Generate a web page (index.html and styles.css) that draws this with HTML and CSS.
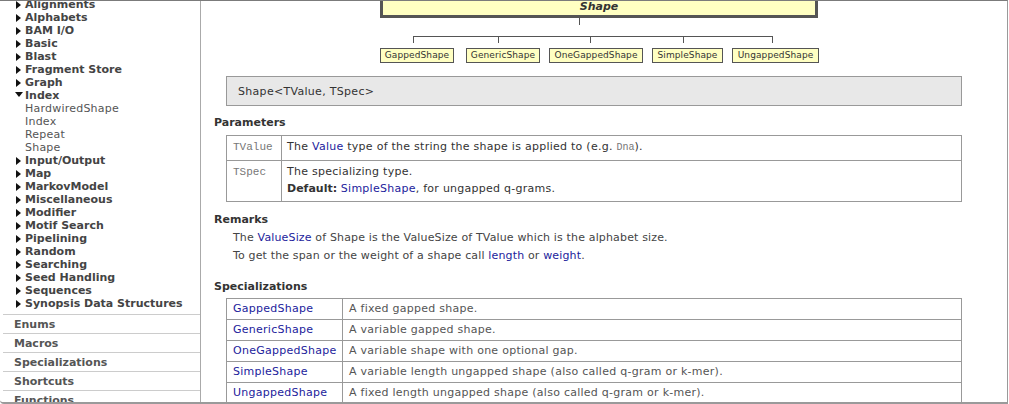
FILE: index.html
```html
<!DOCTYPE html>
<html>
<head>
<meta charset="utf-8">
<link rel="stylesheet" href="styles.css">
</head>
<body>
<div class="window">
  <aside class="sidebar">
    <ul class="tree">
      <li class="closed">Alignments</li>
      <li class="closed">Alphabets</li>
      <li class="closed">BAM I/O</li>
      <li class="closed">Basic</li>
      <li class="closed">Blast</li>
      <li class="closed">Fragment Store</li>
      <li class="closed">Graph</li>
      <li class="open">Index
        <ul class="sub">
          <li>HardwiredShape</li>
          <li>Index</li>
          <li>Repeat</li>
          <li>Shape</li>
        </ul>
      </li>
      <li class="closed">Input/Output</li>
      <li class="closed">Map</li>
      <li class="closed">MarkovModel</li>
      <li class="closed">Miscellaneous</li>
      <li class="closed">Modifier</li>
      <li class="closed">Motif Search</li>
      <li class="closed">Pipelining</li>
      <li class="closed">Random</li>
      <li class="closed">Searching</li>
      <li class="closed">Seed Handling</li>
      <li class="closed">Sequences</li>
      <li class="closed">Synopsis Data Structures</li>
    </ul>
    <div class="tab">Enums</div>
    <div class="tab">Macros</div>
    <div class="tab">Specializations</div>
    <div class="tab">Shortcuts</div>
    <div class="tab">Functions</div>
  </aside>

  <main class="content">
    <div class="diagram">
      <svg class="wires" width="438" height="62" viewBox="0 0 438 62">
        <g stroke="#555" stroke-width="1" fill="none">
          <line x1="199.5" y1="17" x2="199.5" y2="24"/>
          <line x1="33" y1="35.5" x2="393" y2="35.5"/>
          <line x1="33.5" y1="35" x2="33.5" y2="42"/>
          <line x1="118.5" y1="35" x2="118.5" y2="42"/>
          <line x1="210.5" y1="35" x2="210.5" y2="42"/>
          <line x1="303.5" y1="35" x2="303.5" y2="42"/>
          <line x1="392.5" y1="35" x2="392.5" y2="42"/>
        </g>
      </svg>
      <div class="node root">Shape</div>
      <div class="node leaf leaf-gapped">GappedShape</div>
      <div class="node leaf leaf-generic">GenericShape</div>
      <div class="node leaf leaf-onegapped">OneGappedShape</div>
      <div class="node leaf leaf-simple">SimpleShape</div>
      <div class="node leaf leaf-ungapped">UngappedShape</div>
    </div>

    <div class="signature">Shape&lt;TValue, TSpec&gt;</div>

    <h2 class="heading heading-params">Parameters</h2>
    <table class="grid params">
      <tr>
        <td class="name"><span class="code">TValue</span></td>
        <td class="desc">The <a class="link">Value</a> type of the string the shape is applied to (e.g. <span class="code small">Dna</span>).</td>
      </tr>
      <tr>
        <td class="name"><span class="code">TSpec</span></td>
        <td class="desc">
          <div>The specializing type.</div>
          <div><b class="strong">Default:</b> <a class="link">SimpleShape</a>, for ungapped q-grams.</div>
        </td>
      </tr>
    </table>

    <h2 class="heading heading-remarks">Remarks</h2>
    <div class="remarks">
      <p>The <a class="link">ValueSize</a> of Shape is the ValueSize of TValue which is the alphabet size.</p>
      <p>To get the span or the weight of a shape call <a class="link">length</a> or <a class="link">weight</a>.</p>
    </div>

    <h2 class="heading heading-specs">Specializations</h2>
    <table class="grid specs">
      <tr><td class="spec-name"><a class="link">GappedShape</a></td><td class="spec-desc">A fixed gapped shape.</td></tr>
      <tr><td class="spec-name"><a class="link">GenericShape</a></td><td class="spec-desc">A variable gapped shape.</td></tr>
      <tr><td class="spec-name"><a class="link">OneGappedShape</a></td><td class="spec-desc">A variable shape with one optional gap.</td></tr>
      <tr><td class="spec-name"><a class="link">SimpleShape</a></td><td class="spec-desc">A variable length ungapped shape (also called q-gram or k-mer).</td></tr>
      <tr><td class="spec-name"><a class="link">UngappedShape</a></td><td class="spec-desc">A fixed length ungapped shape (also called q-gram or k-mer).</td></tr>
    </table>
  </main>
</div>
</body>
</html>
```

FILE: styles.css
```css
* { box-sizing: border-box; }

body {
  margin: 0;
  background: #fff;
  font-family: "DejaVu Sans", Verdana, sans-serif;
  font-size: 11px;
  color: #444;
}

.window {
  width: 1008px;
  height: 404px;
  display: flex;
  overflow: hidden;
  border-top: 1px solid #7b7b7b;
  border-right: 1px solid #9a9a9a;
  border-bottom: 2px solid #9a9a9a;
  border-bottom-left-radius: 4px;
}

/* ---------- sidebar ---------- */
.sidebar {
  width: 201px;
  flex: none;
  border-right: 1px solid #aaa;
  overflow: hidden;
}

.tree, .sub {
  list-style: none;
  margin: 0;
  padding: 0;
}

.tree {
  margin-top: -3px;
  margin-bottom: 4px;
}

.tree li {
  line-height: 13px;
  font-weight: bold;
  color: #444;
  white-space: nowrap;
}

.tree li.closed { padding-left: 16px; }
.tree li.open { padding-left: 15px; }

.tree li.closed::before {
  content: "";
  display: inline-block;
  width: 0;
  height: 0;
  border-left: 5px solid #111;
  border-top: 4px solid transparent;
  border-bottom: 4px solid transparent;
  margin-right: 4px;
  vertical-align: -1px;
}

.tree li.open::before {
  content: "";
  display: inline-block;
  width: 0;
  height: 0;
  border-top: 5px solid #111;
  border-left: 4px solid transparent;
  border-right: 4px solid transparent;
  margin-right: 2px;
  vertical-align: 2px;
}

.sub { padding-left: 10px; }

.sub li {
  font-weight: normal;
  color: #555;
  letter-spacing: 0.22px;
}

.tab {
  margin-left: 3px;
  height: 19px;
  padding: 2px 0 0 11px;
  line-height: 16px;
  border-top: 1px solid #ccc;
  font-weight: bold;
  color: #555;
}

/* ---------- content ---------- */
.content {
  flex: 1;
  padding-left: 13px;
  overflow: hidden;
  letter-spacing: 0.26px;
}

.diagram {
  position: relative;
  width: 438px;
  height: 62px;
  margin-left: 166px;
  letter-spacing: 0;
}

.wires {
  position: absolute;
  left: 0;
  top: 0;
  overflow: visible;
}

.node {
  position: absolute;
  background: #ffffc2;
  color: #333;
  text-align: center;
  white-space: nowrap;
}

.root {
  left: 0;
  top: -6px;
  width: 438px;
  height: 23px;
  border: 3px solid #555;
  line-height: 18px;
  font-weight: bold;
  font-style: italic;
}

.leaf {
  top: 47px;
  height: 15px;
  border: 1px solid #555;
  font-size: 9px;
  line-height: 13px;
  letter-spacing: 0.1px;
}

.leaf-gapped    { left: 0;     width: 74px; }
.leaf-generic   { left: 86px;  width: 74px; }
.leaf-onegapped { left: 169px; width: 94px; }
.leaf-simple    { left: 272px; width: 71px; }
.leaf-ungapped  { left: 352px; width: 87px; }

.signature {
  margin: 13px 0 0 12px;
  width: 736px;
  height: 30px;
  border: 1px solid #999;
  background: #e8e8e8;
  padding-left: 11px;
  line-height: 29px;
  color: #333;
  letter-spacing: 0.3px;
}

.heading {
  margin: 0;
  font-size: 11px;
  font-weight: bold;
  line-height: 16px;
  color: #333;
  letter-spacing: 0;
}

.heading-params  { margin-top: 9px; }
.heading-remarks { margin-top: 10px; }
.heading-specs   { margin-top: 14px; }

.grid {
  margin-left: 12px;
  width: 736px;
  border-collapse: separate;
  border-spacing: 0;
  border-top: 1px solid #999;
  border-left: 1px solid #999;
  table-layout: fixed;
}

.grid td {
  border-right: 1px solid #999;
  border-bottom: 1px solid #999;
  vertical-align: top;
}

.params { margin-top: 4px; }
.specs  { margin-top: 3px; }

.params td {
  padding: 2px 5px 4px;
  line-height: 17px;
  color: #333;
}

.params td.name {
  width: 55px;
  padding-left: 6px;
}

.specs td {
  padding: 2px 6px;
  line-height: 16px;
}

.specs td.spec-name { width: 116px; }
.specs td.spec-desc { color: #555; }

.code {
  font-family: "Liberation Mono", "Courier New", monospace;
  font-size: 11px;
  color: #777;
  letter-spacing: 0;
}

.code.small { font-size: 10px; }

.strong {
  color: #333;
  letter-spacing: 0;
}

.link {
  color: #1c1c9c;
  text-decoration: none;
}

.remarks { margin-top: 1px; }

.remarks p {
  margin: 0;
  padding-left: 19px;
  line-height: 18px;
  color: #444;
  letter-spacing: 0.15px;
}
```
